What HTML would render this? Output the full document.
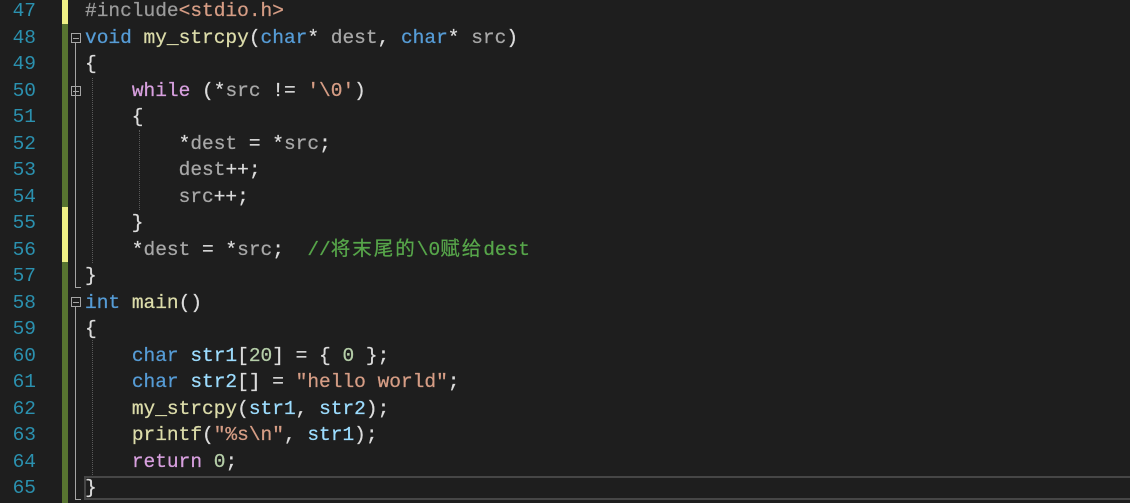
<!DOCTYPE html>
<html><head><meta charset="utf-8"><style>
body{margin:0;width:1130px;height:503px;background:#1e1e1e;overflow:hidden;position:relative;font-family:"Liberation Mono","Noto Sans CJK SC",monospace;font-size:19.5px;}
.l{position:absolute;left:0;height:26.5px;line-height:26.5px;width:1130px;white-space:pre;}
.n{position:absolute;left:0;width:36px;text-align:right;color:#2b91af;}
.c{position:absolute;left:85px;color:#dcdcdc;-webkit-text-stroke:0.25px currentColor;}
.k{color:#569cd6}.f{color:#dcdcaa}.w{color:#d8a0df}.s{color:#d69d85}.m{color:#57a64a}.p{color:#9b9b9b}.v{color:#a8a8a8}.lv{color:#9cdcfe}.num{color:#b5cea8}
.cj{letter-spacing:2px}
.bar{position:absolute;left:62px;width:6px;}
.box{position:absolute;left:71px;width:10px;height:10px;border:1px solid #a5a5a5;box-sizing:border-box;}
.box:after{content:"";position:absolute;left:1px;top:3.5px;width:6px;height:1px;background:#a5a5a5;}
.vl{position:absolute;left:75px;width:1px;background:#a5a5a5;}
.hl{position:absolute;left:75px;width:6px;height:1px;background:#a5a5a5;}
.g{position:absolute;width:0;border-left:1px dotted #5a5a5a;}
</style></head><body>
<div class="bar" style="top:0;height:24px;background:#eff085"></div>
<div class="bar" style="top:24px;height:183px;background:#577430"></div>
<div class="bar" style="top:207px;height:55px;background:#eff085"></div>
<div class="bar" style="top:262px;height:241px;background:#577430"></div>
<div class="box" style="top:33px"></div><div class="vl" style="top:43px;height:244px"></div><div class="hl" style="top:287px"></div>
<div class="box" style="top:86px"></div>
<div class="box" style="top:297px"></div><div class="vl" style="top:307px;height:192px"></div><div class="hl" style="top:499px"></div>
<div class="g" style="left:92px;top:78px;height:185px"></div>
<div class="g" style="left:139px;top:130px;height:80px"></div>
<div class="g" style="left:92px;top:340px;height:135px"></div>
<div style="position:absolute;left:84px;top:476px;width:1050px;height:24px;border:2px solid #464646;box-sizing:border-box"></div>
<div class="l" style="top:-2px"><span class="n">47</span><span class="c"><span class="p">#include</span><span class="s">&lt;stdio.h&gt;</span></span></div>
<div class="l" style="top:24.5px"><span class="n">48</span><span class="c"><span class="k">void</span> <span class="f">my_strcpy</span>(<span class="k">char</span>* <span class="v">dest</span>, <span class="k">char</span>* <span class="v">src</span>)</span></div>
<div class="l" style="top:51px"><span class="n">49</span><span class="c">{</span></div>
<div class="l" style="top:77.5px"><span class="n">50</span><span class="c">    <span class="w">while</span> (*<span class="v">src</span> != <span class="s">'\0'</span>)</span></div>
<div class="l" style="top:104px"><span class="n">51</span><span class="c">    {</span></div>
<div class="l" style="top:130.5px"><span class="n">52</span><span class="c">        *<span class="v">dest</span> = *<span class="v">src</span>;</span></div>
<div class="l" style="top:157px"><span class="n">53</span><span class="c">        <span class="v">dest</span>++;</span></div>
<div class="l" style="top:183.5px"><span class="n">54</span><span class="c">        <span class="v">src</span>++;</span></div>
<div class="l" style="top:210px"><span class="n">55</span><span class="c">    }</span></div>
<div class="l" style="top:236.5px"><span class="n">56</span><span class="c">    *<span class="v">dest</span> = *<span class="v">src</span>;  <span class="m">//<span class="cj">将末尾的</span>\0<span class="cj">赋给</span>dest</span></span></div>
<div class="l" style="top:263px"><span class="n">57</span><span class="c">}</span></div>
<div class="l" style="top:289.5px"><span class="n">58</span><span class="c"><span class="k">int</span> <span class="f">main</span>()</span></div>
<div class="l" style="top:316px"><span class="n">59</span><span class="c">{</span></div>
<div class="l" style="top:342.5px"><span class="n">60</span><span class="c">    <span class="k">char</span> <span class="lv">str1</span>[<span class="num">20</span>] = { <span class="num">0</span> };</span></div>
<div class="l" style="top:369px"><span class="n">61</span><span class="c">    <span class="k">char</span> <span class="lv">str2</span>[] = <span class="s">"hello world"</span>;</span></div>
<div class="l" style="top:395.5px"><span class="n">62</span><span class="c">    <span class="f">my_strcpy</span>(<span class="lv">str1</span>, <span class="lv">str2</span>);</span></div>
<div class="l" style="top:422px"><span class="n">63</span><span class="c">    <span class="f">printf</span>(<span class="s">"%s\n"</span>, <span class="lv">str1</span>);</span></div>
<div class="l" style="top:448.5px"><span class="n">64</span><span class="c">    <span class="w">return</span> <span class="num">0</span>;</span></div>
<div class="l" style="top:475px"><span class="n">65</span><span class="c">}</span></div>
</body></html>
